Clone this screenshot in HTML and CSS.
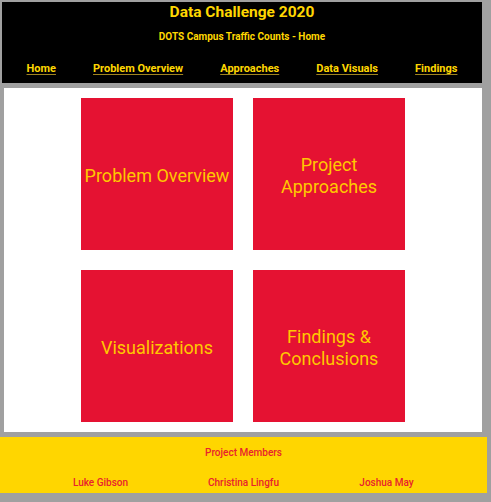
FILE: index.html
```html
<!DOCTYPE html>
<html>
<head>
<meta charset="utf-8">
<title>Data Challenge 2020</title>
<link rel="stylesheet" href="styles.css">
</head>
<body>
<header class="header">
  <h1 class="title">Data Challenge 2020</h1>
  <p class="subtitle">DOTS Campus Traffic Counts - Home</p>
  <nav class="nav">
    <a href="#">Home</a>
    <a href="#">Problem Overview</a>
    <a href="#">Approaches</a>
    <a href="#">Data Visuals</a>
    <a href="#">Findings</a>
  </nav>
</header>
<main class="main">
  <div class="grid">
    <a class="tile" href="#">Problem Overview</a>
    <a class="tile" href="#">Project<br>Approaches</a>
    <a class="tile" href="#">Visualizations</a>
    <a class="tile" href="#">Findings &amp;<br>Conclusions</a>
  </div>
</main>
<footer class="footer">
  <p class="members-title">Project Members</p>
  <div class="members">
    <span>Luke Gibson</span>
    <span>Christina Lingfu</span>
    <span>Joshua May</span>
  </div>
</footer>
</body>
</html>
```
FILE: styles.css
```css
html, body {
  margin: 0;
  padding: 0;
}
body {
  background: #a0a0a0;
  font-family: Roboto, "Liberation Sans", sans-serif;
  padding-top: 2px;
  height: 500px;
  overflow: hidden;
}
.header {
  margin: 0 9px 0 2px;
  height: 81px;
  background: #000;
  text-align: center;
  color: #ffd700;
}
.title {
  margin: 0;
  font-size: 15.5px;
  line-height: 20px;
  font-weight: 700;
}
.subtitle {
  margin: 8px 0 0;
  font-size: 10px;
  line-height: 14px;
  font-weight: 700;
}
.nav {
  margin-top: 18px;
  display: flex;
  justify-content: space-around;
  padding: 0 6px;
  line-height: 14px;
}
.nav a {
  color: #ffd700;
  font-size: 11px;
  font-weight: 700;
  text-decoration: underline;
  text-decoration-color: #a08420;
  text-underline-offset: 2px;
}
.main {
  margin: 5px 9px 0 4px;
  height: 334px;
  padding-top: 10px;
  background: #fff;
}
.grid {
  display: grid;
  grid-template-columns: 152px 152px;
  grid-auto-rows: 152px;
  gap: 20px;
  justify-content: center;
}
.tile {
  background: #e51232;
  color: #ffc800;
  display: flex;
  align-items: center;
  justify-content: center;
  text-align: center;
  font-size: 18px;
  line-height: 22px;
  padding-top: 4px;
  text-decoration: none;
}
.footer {
  margin: 5px 4px 0 0;
  height: 47px;
  padding-top: 9px;
  background: #ffd600;
  color: #e8222e;
  text-align: center;
  font-size: 10px;
  font-weight: 500;
}
.members-title {
  margin: 0;
  line-height: 14px;
}
.members {
  margin-top: 16px;
  display: flex;
  justify-content: center;
  line-height: 14px;
}
.members span {
  width: 143px;
}
```
